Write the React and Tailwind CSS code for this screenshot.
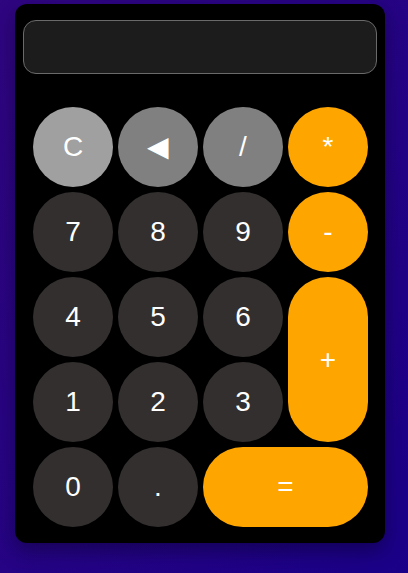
import React from "react";

const keys = [
  { label: "C", cls: "bg-[#a0a0a0]" },
  { label: "◀", cls: "bg-[#808080]" },
  { label: "/", cls: "bg-[#808080]" },
  { label: "*", cls: "bg-[#ffa500]" },
  { label: "7", cls: "bg-[#332f2f]" },
  { label: "8", cls: "bg-[#332f2f]" },
  { label: "9", cls: "bg-[#332f2f]" },
  { label: "-", cls: "bg-[#ffa500]" },
  { label: "4", cls: "bg-[#332f2f]" },
  { label: "5", cls: "bg-[#332f2f]" },
  { label: "6", cls: "bg-[#332f2f]" },
  { label: "+", cls: "bg-[#ffa500] row-span-2" },
  { label: "1", cls: "bg-[#332f2f]" },
  { label: "2", cls: "bg-[#332f2f]" },
  { label: "3", cls: "bg-[#332f2f]" },
  { label: "0", cls: "bg-[#332f2f]" },
  { label: ".", cls: "bg-[#332f2f]" },
  { label: "=", cls: "bg-[#ffa500] col-span-2" },
];

export default function App() {
  return (
    <div className="min-h-[573px] w-full bg-gradient-to-br from-[#2f0580] to-[#1a0088] pl-[15px] pt-[4px] font-['Liberation_Sans',Arial,sans-serif]">
      <div className="w-[370px] rounded-[12px] bg-black px-[8px] pt-[16px] pb-[16px] shadow-[0_8px_20px_rgba(0,0,0,0.35)]">
        <div className="h-[54px] w-[354px] rounded-[13px] border border-[#6a6a6a] bg-[#1c1c1c]" />
        <div className="mt-[33px] grid grid-cols-[repeat(4,80px)] auto-rows-[80px] gap-[5px] pl-[10px]">
          {keys.map((k) => (
            <button
              key={k.label}
              className={`flex items-center justify-center rounded-full text-[28px] text-white ${k.cls}`}
            >
              {k.label}
            </button>
          ))}
        </div>
      </div>
    </div>
  );
}
